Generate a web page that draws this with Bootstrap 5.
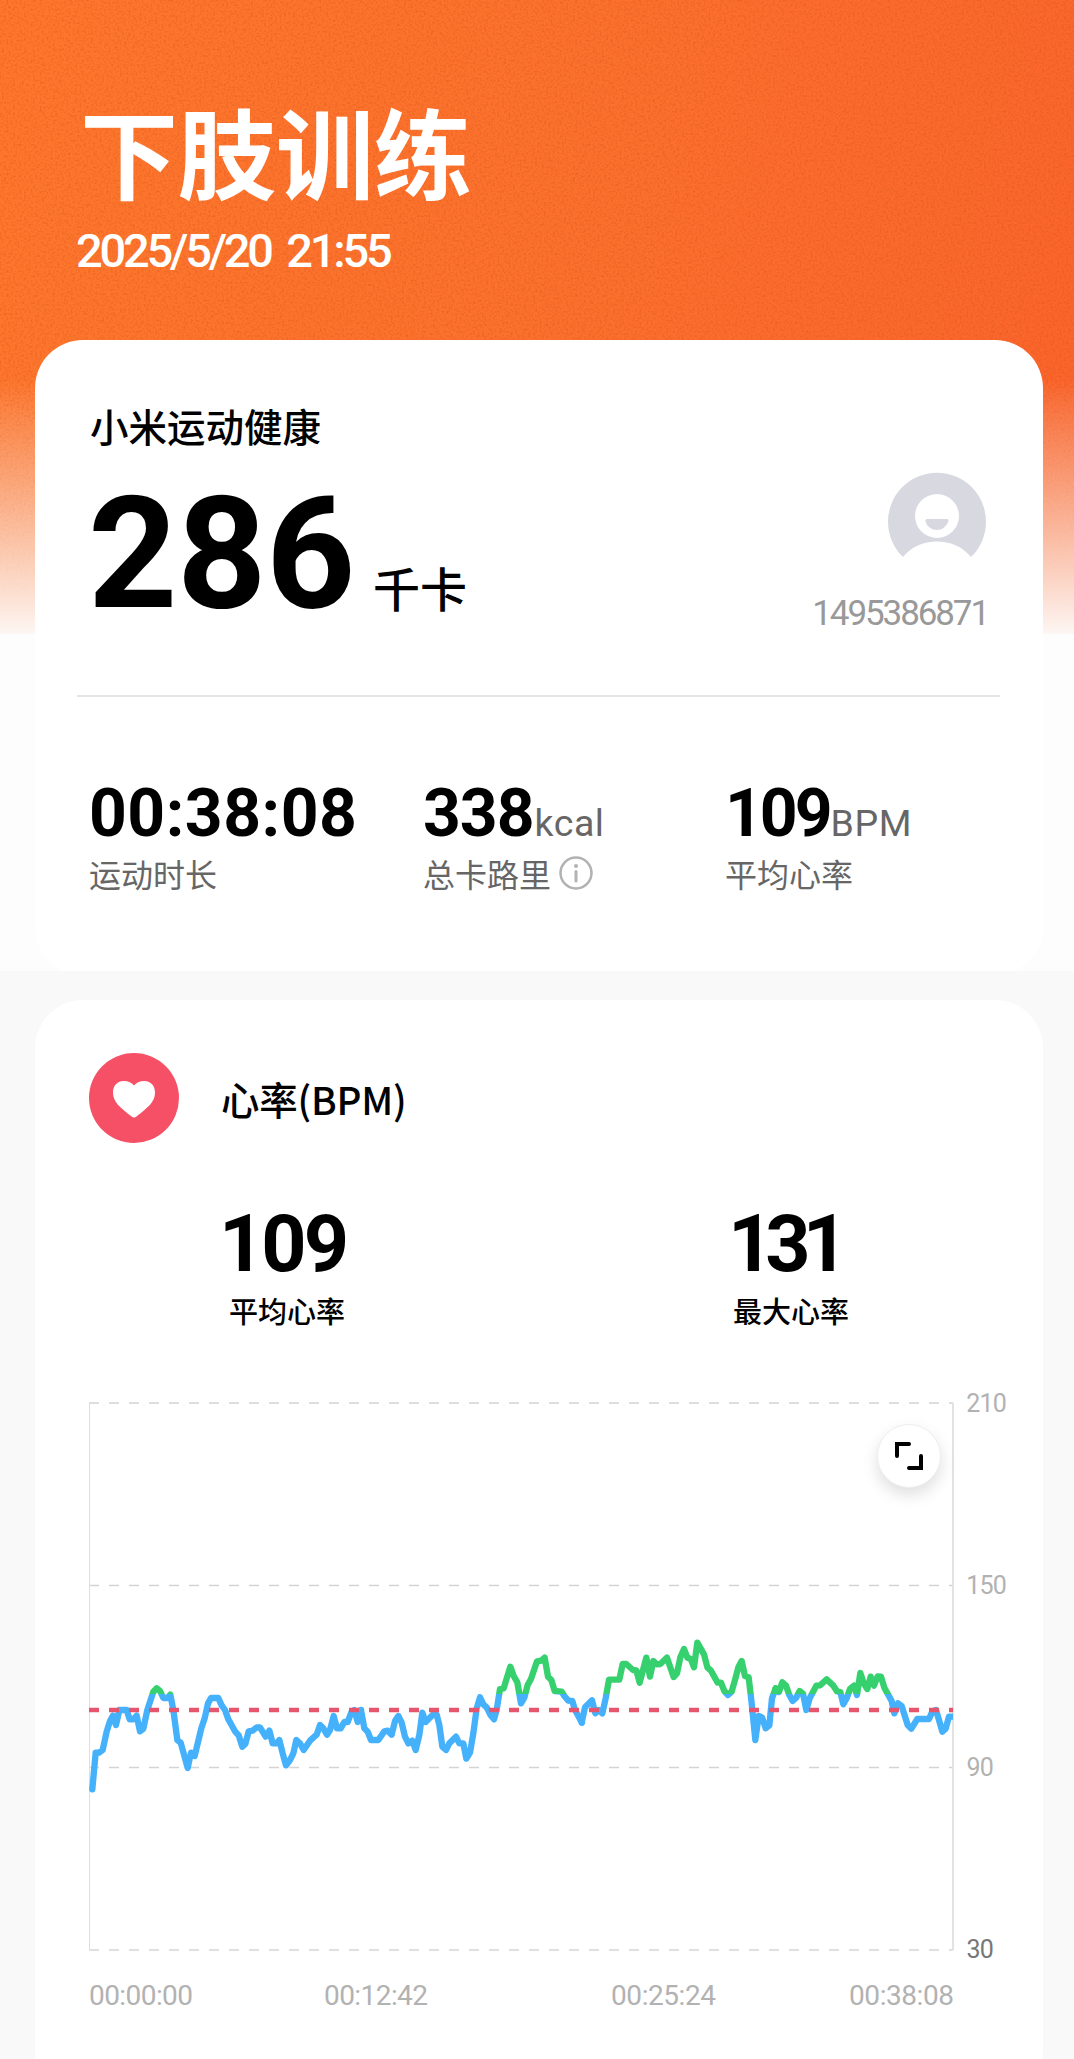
<!DOCTYPE html>
<html lang="zh-CN">
<head>
<meta charset="utf-8">
<meta name="viewport" content="width=device-width, initial-scale=1">
<title>下肢训练</title>
<link href="https://cdn.jsdelivr.net/npm/bootstrap@5.3.0/dist/css/bootstrap.min.css" rel="stylesheet">
<style>
body{background:#f9f9f9;color:#000;font-family:"Noto Sans CJK SC",sans-serif;width:1074px;height:2059px;overflow:hidden}
.summary-zone{height:971px;background:#fdfdfd;overflow:hidden}
.hero-bg{top:0;left:0;width:1074px;height:634px}
.hero-head{height:340px;padding:94px 77px 0 80px}
.hero-title{font-size:98px;font-weight:700;line-height:110px;letter-spacing:0;margin:0}
.hero-date{font-family:Roboto,sans-serif;font-weight:500;font-size:47px;line-height:60px;margin:17px 0 0 -4px;letter-spacing:-3.2px;word-spacing:7px;white-space:pre}
.panel{background:#fff;margin:0 31px 0 35px;border-radius:48px}
.panel-sum{height:635px;padding:60px 43px 0 42px}
.app-name{font-size:38.5px;font-weight:500;line-height:50px;padding-left:13px}
.num{font-family:Roboto,sans-serif;font-weight:700;line-height:1;white-space:nowrap}
.kcal-row{height:245px;padding:26px 14px 0 11px}
.kcal-big{font-size:156px;letter-spacing:-.5px}
.kcal-unit{font-size:47px;font-weight:500;margin-left:18px;line-height:1}
.who{margin-top:-4px}
.uid{font-family:Roboto,sans-serif;font-size:35px;line-height:40px;color:#999;letter-spacing:-2.1px;margin-top:24px;margin-right:-2px}
.rule{height:2px;background:#e4e4e4}
.stat-row{padding:84px 0 0 12px}
.stat-a{width:334px}.stat-b{width:302px}
.stat-num{font-size:66px;letter-spacing:-1px}
.stat-time{letter-spacing:.5px}
.stat-bpm{letter-spacing:-3px}
.stat-unit{font-weight:400;font-size:37.5px;line-height:1;color:#666;letter-spacing:.5px;margin-left:1px}
.stat-lab{font-size:32px;line-height:40px;color:#666;font-weight:400;margin-top:6px}
.panel-hr{margin-top:29px;height:1100px;position:relative}
.hr-head{padding:53px 0 0 54px;gap:42px}
.hr-title{font-size:38.5px;line-height:50px;font-weight:500;letter-spacing:-.2px}
.hr-stats{height:236px;padding:62px 0 0 0}
.hr-col{width:504px;text-align:center}
.hr-num{font-size:79px;letter-spacing:-3px;margin-left:-9px}
.hr-max{letter-spacing:-8px;margin-left:-14px}
.hr-lab{font-size:29px;line-height:40px;font-weight:500;margin-top:6px}
.expand{left:842px;top:424px;width:64px;height:64px;border:1px solid #eee;background:#fff;box-shadow:0 7px 16px rgba(0,0,0,.13);padding:0}
svg text{font-family:Roboto,sans-serif;fill:#b2b2b2}
</style>
<script src="https://cdn.jsdelivr.net/npm/bootstrap@5.3.0/dist/js/bootstrap.bundle.min.js"></script>
</head>
<body>
<main>
<section class="summary-zone position-relative">
  <svg class="hero-bg position-absolute" viewBox="0 0 1074 634" aria-hidden="true">
    <defs>
      <linearGradient id="base" x1="0" y1=".3" x2="1" y2=".45"><stop offset="0" stop-color="#fe772d"/><stop offset=".55" stop-color="#fc702d"/><stop offset="1" stop-color="#fb652c"/></linearGradient>
      <linearGradient id="fade" x1="0" y1="0" x2="0" y2="1"><stop offset=".6" stop-color="#fdf3ef" stop-opacity="0"/><stop offset=".68" stop-color="#fbe8e0" stop-opacity=".22"/><stop offset="1" stop-color="#fdf6f3" stop-opacity="1"/></linearGradient>
      <filter id="grain" x="0" y="0" width="100%" height="100%" color-interpolation-filters="sRGB"><feTurbulence type="fractalNoise" baseFrequency=".45" numOctaves="2" seed="4"/><feColorMatrix values="0 0 0 0 .84  0 0 0 0 .34  0 0 0 0 .1  2.4 0 0 0 -1.05"/></filter>
    </defs>
    <rect width="1074" height="634" fill="url(#base)"/>
    <rect width="1074" height="634" filter="url(#grain)" opacity=".5"/>
    <rect width="1074" height="634" fill="url(#fade)"/>
  </svg>
  <div class="position-relative">
    <header class="hero-head text-white">
      <h1 class="hero-title">下肢训练</h1>
      <div class="hero-date">2025/5/20 21:55</div>
    </header>
    <div class="panel panel-sum">
      <div class="app-name">小米运动健康</div>
      <div class="kcal-row d-flex justify-content-between align-items-start">
        <div class="d-flex align-items-baseline"><span class="num kcal-big">286</span><span class="kcal-unit">千卡</span></div>
        <div class="who d-flex flex-column align-items-end">
          <svg width="98" height="98" viewBox="0 0 98 98"><path d="M15 85A49 49 0 1 1 83 85C74 74 62 69.500 49 69.500S24 74 15 85Z" fill="#d7d8e0"/><circle cx="49" cy="44" r="22" fill="#fff"/><path d="M39 47H59Q61 47 60.300 49.500C58 55 54 58 49 58S39 55 37.600 49.500Q37 47 39 47Z" fill="#d7d8e0"/></svg>
          <div class="uid">1495386871</div>
        </div>
      </div>
      <div class="rule"></div>
      <div class="stat-row d-flex">
        <div class="stat-a"><div class="num stat-num stat-time">00:38:08</div><div class="stat-lab">运动时长</div></div>
        <div class="stat-b"><div class="num stat-num">338<span class="stat-unit">kcal</span></div>
          <div class="stat-lab d-flex align-items-center">总卡路里<svg class="ms-2" width="34" height="34" viewBox="0 0 34 34"><circle cx="17" cy="17" r="15.500" fill="none" stroke="#b2b2b2" stroke-width="2.500"/><circle cx="17" cy="10" r="2" fill="#b2b2b2"/><path d="M17 15.500V25" stroke="#b2b2b2" stroke-width="3" stroke-linecap="round"/></svg></div></div>
        <div><div class="num stat-num stat-bpm">109<span class="stat-unit">BPM</span></div><div class="stat-lab">平均心率</div></div>
      </div>
    </div>
  </div>
</section>
<section class="panel panel-hr">
  <div class="hr-head d-flex align-items-center">
    <svg width="90" height="90" viewBox="0 0 90 90"><circle cx="45" cy="45" r="45" fill="#f65066"/><path d="M45 64.500Q43.500 64.500 42 63C31 54.500 24 49 24 39.500C24 32 29 28 34.500 28C39.500 28 43 30 45 32.500C47 30 50.500 28 55.500 28C61 28 66 32 66 39.500C66 49 59 54.500 48 63Q46.500 64.500 45 64.500Z" fill="#fff"/></svg>
    <div class="hr-title">心率(BPM)</div>
  </div>
  <div class="hr-stats d-flex">
    <div class="hr-col"><div class="num hr-num">109</div><div class="hr-lab">平均心率</div></div>
    <div class="hr-col"><div class="num hr-num hr-max">131</div><div class="hr-lab">最大心率</div></div>
  </div>
  <svg class="d-block" width="1008" height="650" viewBox="35 1379 1008 650">
    <defs>
      <linearGradient id="zone" gradientUnits="userSpaceOnUse" x1="0" y1="0" x2="0" y2="446"><stop offset=".5" stop-color="#37d06f"/><stop offset=".5" stop-color="#45b1fb"/></linearGradient>
      <clipPath id="plot"><rect x="80" y="1400" width="873" height="552"/></clipPath>
    </defs>
    <g stroke="#d4d4d4" stroke-width="1.300" stroke-dasharray="10 10"><path d="M89 1403H953M89 1585.500H953M89 1767.500H953"/><path d="M89 1950H953" stroke-width="2" stroke="#e0e0e0"/></g>
    <path d="M89.500 1403V1950" stroke="#dedede"/><path d="M953 1403V1950" stroke="#e2e2e2" stroke-width="2"/>
    <g clip-path="url(#plot)"><g transform="translate(80 1620) scale(.33333)" fill="none" stroke="url(#zone)" stroke-width="19" stroke-linejoin="round" stroke-linecap="round">
      <polyline points="37,508 47,398 57,398 68,390 80,335 90,303 99,287 108,315 118,270 140,270 149,298 160,298 170,287 180,334 190,326 202,270 220,215 230,205 240,213 250,234 262,234 271,224 280,270 292,360 302,368 323,444 333,398 344,408 364,325 374,295 384,250 393,234 415,234 425,256 435,270 445,298 465,334 476,346 487,380 496,372 506,334 518,332 530,322 540,322 557,350 568,332 578,370 590,370 598,360 608,400 618,436 630,420 640,400 649,360 660,370 671,390 690,362 710,344 720,315 730,325 741,344 750,330 761,288 771,325 782,325 793,306 803,306 815,275 823,270 833,306 843,270"/>
      <polyline transform="translate(660)" points="183,270 193,325 203,335 213,360 235,360 253,334 263,332 275,344 285,303 295,288 305,308 315,350 325,370 337,362 347,390 358,345 367,278 377,306 400,283 410,284 418,315 427,380 438,390 448,370 468,350 478,370 490,370 499,416 510,398 520,340 530,265 540,232 550,253 560,262 572,286 582,298 590,270 600,207 611,205 631,140 641,168 652,187 663,250 673,233 683,195 693,177 711,124 724,122 734,113 744,170 754,180 764,213 785,215 793,228 805,242 817,243 825,270 846,308"/>
      <polyline transform="translate(1380)" points="125,308 135,262 156,241 166,280 176,270 187,280 197,235 207,179 238,179 248,132 259,132 279,150 289,151 299,188 319,113 330,170 340,123 350,133 361,132 381,113 401,171 411,160 421,112 432,87 442,113 452,116 462,142 472,68 492,103 502,142 513,152 533,188 543,188 553,213 564,225 575,215 585,180 595,142 605,123 615,168 626,172 634,240 646,360 656,288 666,292 677,325 688,316 696,235 707,205"/>
      <polyline transform="translate(1980)" points="107,205 117,216 127,187 138,197 148,225 158,243 168,234 179,213 189,221 199,270 209,235 229,197 240,196 260,178 280,197 291,214 301,216 310,253 320,235 330,207 342,197 351,225 361,159 371,190 382,207 392,170 402,197 413,169 423,170 433,203 455,243 463,280 474,250 485,258 503,315 514,326 532,297 567,297 577,275 588,270 597,300 607,335 617,326 627,290 645,290"/>
    </g></g>
    <path d="M89 1710H953" stroke="#e5556c" stroke-width="4.300" stroke-dasharray="10 10"/>
    <g font-size="25" text-anchor="end" letter-spacing="-.8"><text x="1006" y="1412">210</text><text x="1006" y="1594">150</text><text x="993" y="1776">90</text><text x="993" y="1958" style="fill:#777">30</text></g>
    <g font-size="28"><text x="89" y="2005" textLength="104">00:00:00</text><text x="324" y="2005" textLength="104">00:12:42</text><text x="611" y="2005" textLength="105">00:25:24</text><text x="849" y="2005" textLength="105">00:38:08</text></g>
  </svg>
  <button type="button" class="expand rounded-circle position-absolute d-flex align-items-center justify-content-center" aria-label="全屏"><svg width="28" height="28" viewBox="0 0 28 28" fill="none" stroke="#000" stroke-width="4" stroke-linecap="round" stroke-linejoin="miter"><path d="M2 14V2H14M26 14V26H14"/></svg></button>
</section>
</main>
</body>
</html>
